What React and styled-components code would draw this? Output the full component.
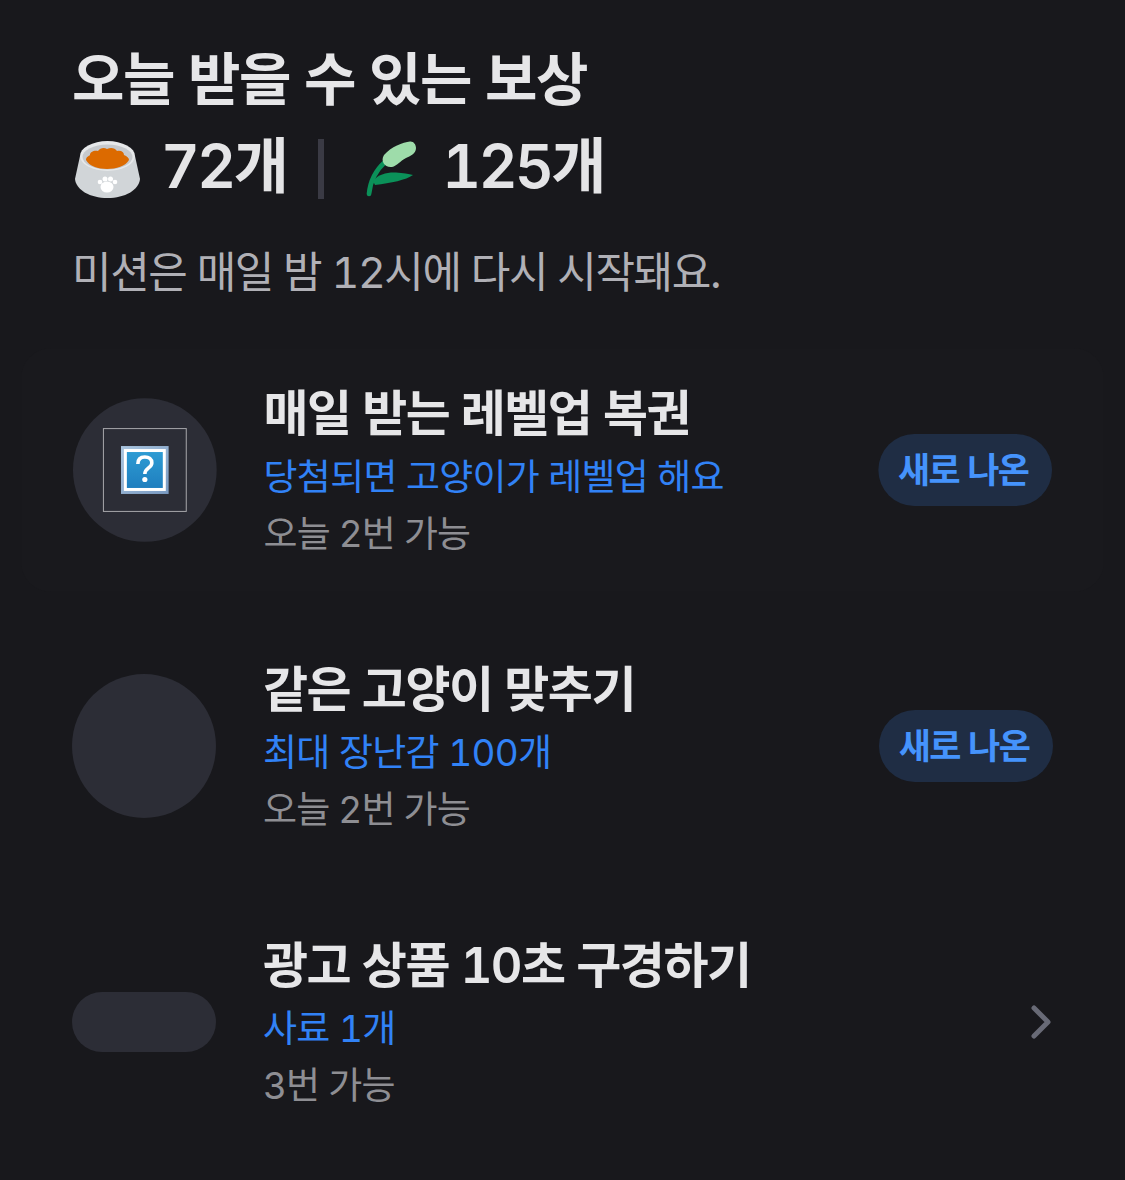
import styled, { createGlobalStyle } from "styled-components"

const GlobalStyle = createGlobalStyle`
    html, body {
        margin: 0;
        padding: 0;
        background-color: #18181c;
    }
    * {
        box-sizing: border-box;
    }
`

const missions = [
    { title: "매일 받는 레벨업 복권", desc: "당첨되면 고양이가 레벨업 해요", note: "오늘 2번 가능", thumb: "broken", side: "badge", pressed: true },
    { title: "같은 고양이 맞추기", desc: "최대 장난감 100개", note: "오늘 2번 가능", thumb: "circle", side: "badge" },
    { title: "광고 상품 10초 구경하기", desc: "사료 1개", note: "3번 가능", thumb: "pill", side: "chevron" },
]

const BowlIcon = () => (
    <svg width="65" height="57" viewBox="0 0 65 57">
        <path d="M5 15 L0 38 C1 49 15 57 32.5 57 C50 57 64 49 65 38 L60 15 Z" fill="#d1d5d8" />
        <ellipse cx="32.5" cy="15" rx="27.5" ry="15" fill="#e6e8ea" />
        <ellipse cx="32.5" cy="16" rx="25" ry="12.5" fill="#c6c9cd" />
        <path d="M11 19 C11 16 14 15 15 14 C15 11 19 9 23 10 C25 7 29 6 32 8 C36 6 40 7 42 10 C46 9 49 11 49 14 C52 15 54 17 54 19 C51 25 41 28 32 28 C23 28 14 25 11 19 Z" fill="#dc6a00" />
        <ellipse cx="32" cy="46" rx="6.5" ry="5.5" fill="#fff" />
        <circle cx="25" cy="41" r="2.3" fill="#fff" />
        <circle cx="30" cy="38" r="2.5" fill="#fff" />
        <circle cx="35.5" cy="38" r="2.5" fill="#fff" />
        <circle cx="40" cy="41" r="2.3" fill="#fff" />
    </svg>
)

const LeafIcon = () => (
    <svg width="50" height="56" viewBox="0 0 50 56">
        <path d="M3 53 C4 42 9 30 19 21" fill="none" stroke="#0b9159" strokeWidth="4.7" strokeLinecap="round" />
        <path d="M7 40 C12 33 22 31 30 31.5 C37 32 43 33 47 34 C40 39 25 42 9 44 Z" fill="#0b9159" />
        <path d="M44 0.5 C37 1 25 6 18 14 C14 20 19 27 26 26 C31 25 34 20 40 17 C44 15 50 13 50 7 C50 3 47 0 44 0.5 Z" fill="#9edcaa" />
    </svg>
)

const Chevron = () => (
    <svg width="24" height="36" viewBox="0 0 24 36">
        <path d="M5 4 L19 18 L5 32" fill="none" stroke="#686a76" strokeWidth="5" strokeLinecap="round" strokeLinejoin="round" />
    </svg>
)

const BrokenImage = () => (
    <BrokenFrame>
        <svg width="48" height="48" viewBox="0 0 48 48">
            <defs>
                <linearGradient id="q" x1="0" y1="0" x2="0" y2="1">
                    <stop offset="0" stopColor="#2d9bd3" />
                    <stop offset="1" stopColor="#1f7fbf" />
                </linearGradient>
                <linearGradient id="rim" x1="0" y1="0" x2="1" y2="1">
                    <stop offset="0" stopColor="#aac5df" />
                    <stop offset="1" stopColor="#7a9ac2" />
                </linearGradient>
            </defs>
            <rect width="48" height="48" fill="url(#rim)" />
            <rect x="3" y="3" width="42" height="42" fill="#fff" />
            <rect x="6" y="6" width="36" height="36" fill="url(#q)" />
            <path d="M17 18 C17 13 20 11 24 11 C28 11 31 13 31 17 C31 22 24 22 24 28" fill="none" stroke="#fff" strokeWidth="3.6" />
            <circle cx="24" cy="33.5" r="2.6" fill="#fff" />
        </svg>
    </BrokenFrame>
)

export default function App() {
    return (
        <Page>
            <GlobalStyle />
            <Header>
                <Title>오늘 받을 수 있는 보상</Title>
                <Totals>
                    <BowlIcon />
                    <Count $gap={21}>72개</Count>
                    <Divider />
                    <LeafIcon />
                    <Count $gap={26}>125개</Count>
                </Totals>
                <Notice>미션은 매일 밤 12시에 다시 시작돼요.</Notice>
            </Header>
            <List>
                {missions.map((m) => (
                    <Row key={m.title} $pressed={m.pressed}>
                        <Thumb $shape={m.thumb}>{m.thumb === "broken" && <BrokenImage />}</Thumb>
                        <Body>
                            <RowTitle>{m.title}</RowTitle>
                            <RowDesc>{m.desc}</RowDesc>
                            <RowNote>{m.note}</RowNote>
                        </Body>
                        {m.side === "badge" ? <Badge>새로 나온</Badge> : <Chevron />}
                    </Row>
                ))}
            </List>
        </Page>
    )
}

const fontStack = `"Inter", "Noto Sans CJK KR", sans-serif`

const Page = styled.div`
    width: 1125px;
    height: 1180px;
    overflow: hidden;
    background-color: #18181c;
    font-family: ${fontStack};
    font-variant-numeric: tabular-nums;
`

const Header = styled.header`
    padding: 44px 72px 0;
`

const Title = styled.h1`
    margin: 0;
    font-size: 57px;
    line-height: 72px;
    font-weight: 600;
    letter-spacing: -1.4px;
    color: #e6e6e8;
`

const Totals = styled.div`
    display: flex;
    align-items: center;
    height: 72px;
    margin-top: 17px;
    padding-left: 3px;
`

const Count = styled.span`
    margin: 0 0 16px ${(p) => p.$gap}px;
    font-size: 60px;
    font-weight: 600;
    letter-spacing: -2.5px;
    color: #e4e4e6;
`

const Divider = styled.div`
    width: 6px;
    height: 60px;
    margin: 0 42px 0 32px;
    background-color: #3a3a44;
`

const Notice = styled.p`
    margin: 37px 0 0;
    font-size: 43px;
    line-height: 60px;
    letter-spacing: -1.4px;
    color: #b0b0b6;
`

const List = styled.div`
    display: flex;
    flex-direction: column;
    gap: 32px;
    margin-top: 46px;
    padding: 0 72px;
`

const Row = styled.div`
    position: relative;
    display: flex;
    align-items: center;
    height: 244px;
    ${(p) => p.$pressed && "transform: scale(0.998);"}

    &::before {
        content: "";
        display: ${(p) => (p.$pressed ? "block" : "none")};
        position: absolute;
        inset: 0 -52px;
        border-radius: 30px;
        background-color: #19191d;
    }

    > * {
        position: relative;
    }
`

const Thumb = styled.div`
    flex: none;
    display: flex;
    align-items: center;
    justify-content: center;
    width: 144px;
    height: ${(p) => (p.$shape === "pill" ? "60px" : "144px")};
    border-radius: ${(p) => (p.$shape === "pill" ? "30px" : "50%")};
    background-color: #2c2d36;
`

const BrokenFrame = styled.div`
    display: flex;
    align-items: center;
    justify-content: center;
    width: 84px;
    height: 84px;
    border: 1px solid #a8a8ac;
`

const Body = styled.div`
    flex: 1;
    min-width: 0;
    margin-left: 47px;
    padding-top: 3px;
`

const RowTitle = styled.div`
    font-size: 49px;
    line-height: 60px;
    font-weight: 600;
    letter-spacing: -1.5px;
    color: #e6e6e8;
`

const RowDesc = styled.div`
    margin-top: 7px;
    font-size: 37px;
    line-height: 52px;
    letter-spacing: -0.7px;
    color: #3182f6;
`

const RowNote = styled.div`
    margin-top: 5px;
    font-size: 37px;
    line-height: 52px;
    letter-spacing: -0.9px;
    color: #8e8e93;
`

const Badge = styled.div`
    flex: none;
    display: flex;
    align-items: center;
    justify-content: center;
    width: 174px;
    height: 72px;
    padding: 0 4px 6px 0;
    border-radius: 36px;
    background-color: #1f2d44;
    font-size: 35px;
    font-weight: 600;
    letter-spacing: -1.5px;
    color: #4593fc;
`
